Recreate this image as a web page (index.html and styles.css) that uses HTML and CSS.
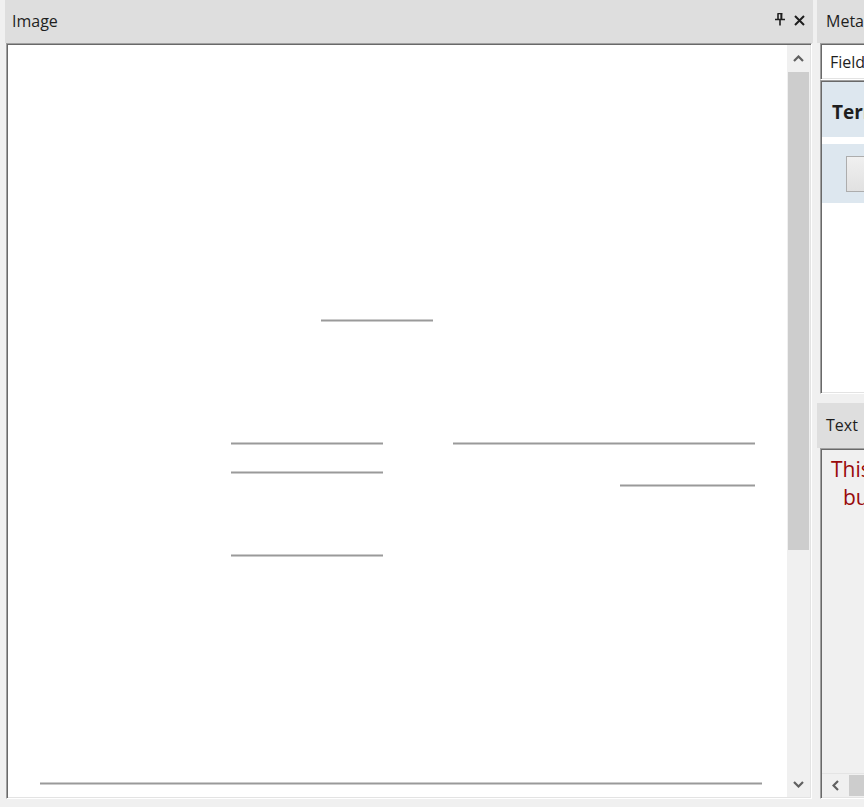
FILE: index.html
```html
<!DOCTYPE html>
<html>
<head>
<meta charset="utf-8">
<title>Image viewer</title>
<link rel="stylesheet" href="styles.css">
</head>
<body>
<div class="app">
  <section class="pane pane-left">
    <header class="pane-title">
      <span class="title-text">Image</span>
      <span class="title-buttons">
        <svg class="icon-pin" width="10" height="13" viewBox="0 0 10 13">
          <path d="M2.5 0.5h5M3 0.5v6M6.5 0.5v6M0 6.5h10M5 6.5v6" fill="none" stroke="#1e1e1e" stroke-width="1.6"/>
          <rect x="5.5" y="1" width="1.6" height="5.5" fill="#1e1e1e"/>
        </svg>
        <svg class="icon-close" width="11" height="11" viewBox="0 0 11 11">
          <path d="M1 1L10 10M10 1L1 10" fill="none" stroke="#1e1e1e" stroke-width="2"/>
        </svg>
      </span>
    </header>
    <div class="sunken image-box">
      <div class="canvas">
        <svg class="drawing" width="779" height="752" viewBox="0 0 779 752">
          <g stroke="#9a9a9a" stroke-width="2" fill="none">
            <line x1="313" y1="275.5" x2="425" y2="275.5"/>
            <line x1="223" y1="398.5" x2="375" y2="398.5"/>
            <line x1="445" y1="398.5" x2="747" y2="398.5"/>
            <line x1="223" y1="427.5" x2="375" y2="427.5"/>
            <line x1="612" y1="440.5" x2="747" y2="440.5"/>
            <line x1="223" y1="510.5" x2="375" y2="510.5"/>
            <line x1="32" y1="738.5" x2="754" y2="738.5"/>
          </g>
        </svg>
      </div>
      <div class="vscroll">
        <div class="sb-btn">
          <svg width="11" height="7" viewBox="0 0 11 7"><path d="M1 6L5.5 1.5L10 6" fill="none" stroke="#606060" stroke-width="2.2"/></svg>
        </div>
        <div class="sb-track"><div class="sb-thumb"></div></div>
        <div class="sb-btn">
          <svg width="11" height="7" viewBox="0 0 11 7"><path d="M1 1L5.5 5.5L10 1" fill="none" stroke="#606060" stroke-width="2.2"/></svg>
        </div>
      </div>
    </div>
  </section>
  <section class="pane pane-right">
    <header class="pane-title pane-title-right">
      <span class="title-text">Metadata</span>
    </header>
    <div class="sunken combo">Field name</div>
    <div class="sunken grid-box">
      <div class="grid-head">Term</div>
      <div class="grid-row"><button class="row-btn">Edit</button></div>
    </div>
    <header class="pane-title pane-title-right text-title">
      <span class="title-text">Text</span>
    </header>
    <div class="sunken text-box">
      <div class="text-content">
        <div class="text-line">This is the recognized text</div>
        <div class="text-line indent">but it is shown here</div>
      </div>
      <div class="hscroll">
        <div class="hsb-btn">
          <svg width="7" height="11" viewBox="0 0 7 11"><path d="M6 1L1.5 5.5L6 10" fill="none" stroke="#606060" stroke-width="2.2"/></svg>
        </div>
        <div class="hsb-thumb"></div>
      </div>
    </div>
  </section>
</div>
</body>
</html>
```
FILE: styles.css
```css
html, body {
  margin: 0;
  padding: 0;
  background: #f0f0f0;
  overflow: hidden;
}

body {
  font-family: "Open Sans", "Noto Sans", sans-serif;
  font-size: 16px;
  color: #1e1e1e;
}

.app {
  display: flex;
  width: 864px;
  height: 807px;
  overflow: hidden;
  padding-left: 5px;
  box-sizing: border-box;
}

.pane {
  display: flex;
  flex-direction: column;
  flex-shrink: 0;
  padding-bottom: 8px;
  box-sizing: border-box;
  height: 807px;
}

.pane-left {
  width: 808px;
  margin-right: 4px;
}

.pane-right {
  width: 320px;
}

.pane-title {
  height: 43px;
  flex-shrink: 0;
  background: #dedede;
  display: flex;
  align-items: center;
  padding: 0 7px 2px;
  box-sizing: border-box;
}

.pane-title-right {
  padding-left: 9px;
}

.title-text {
  flex: 1;
  white-space: nowrap;
}

.title-buttons {
  display: flex;
  align-items: center;
  gap: 9px;
  padding-right: 1px;
}

.icon-pin {
  margin-top: -3px;
}

.sunken {
  border: 1px solid;
  border-color: #a0a0a0 #ffffff #ffffff #a0a0a0;
  box-shadow: inset 1px 1px #696969, inset -1px -1px #e3e3e3;
  padding: 1px;
  box-sizing: border-box;
}

.image-box {
  flex: 1;
  display: flex;
  margin: 0 1px;
  background: #ffffff;
}

.canvas {
  flex: 1;
  overflow: hidden;
}

.drawing {
  display: block;
}

.vscroll {
  width: 23px;
  display: flex;
  flex-direction: column;
  background: #f0f0f0;
}

.sb-btn {
  height: 26px;
  display: flex;
  align-items: center;
  justify-content: center;
  flex-shrink: 0;
}

.sb-track {
  flex: 1;
  padding: 1px 1px 0;
}

.sb-thumb {
  height: 478px;
  background: #cdcdcd;
}

.combo {
  margin-left: 3px;
  height: 37px;
  background: #ffffff;
  display: flex;
  align-items: center;
  padding-left: 9px;
  white-space: nowrap;
  flex-shrink: 0;
}

.grid-box {
  margin-left: 3px;
  height: 314px;
  background: #ffffff;
  flex-shrink: 0;
}

.grid-head {
  height: 55px;
  background: #dde7ef;
  display: flex;
  align-items: center;
  padding: 5px 0 0 10px;
  box-sizing: border-box;
  font-weight: bold;
  font-size: 19px;
  white-space: nowrap;
}

.grid-row {
  margin-top: 7px;
  height: 59px;
  background: #dde7ef;
  padding: 12px 0 0 24px;
  box-sizing: border-box;
}

.row-btn {
  height: 36px;
  width: 120px;
  border: 1px solid #adadad;
  background: linear-gradient(#f0f0f0, #e1e1e1);
  font: inherit;
  padding: 0;
}

.text-title {
  margin-top: 9px;
  height: 45px;
}

.text-box {
  margin-left: 3px;
  flex: 1;
  display: flex;
  flex-direction: column;
  background: #f0f0f0;
}

.text-content {
  flex: 1;
  padding: 5px 0 0 9px;
  color: #990a0a;
  font-size: 21px;
  line-height: 28px;
  white-space: nowrap;
}

.indent {
  padding-left: 12px;
}

.hscroll {
  height: 24px;
  display: flex;
  align-items: stretch;
  border-top: 1px solid #e4e4e4;
  background: #f0f0f0;
  box-sizing: border-box;
}

.hsb-btn {
  width: 26px;
  display: flex;
  align-items: center;
  justify-content: center;
  flex-shrink: 0;
}

.hsb-thumb {
  width: 200px;
  margin: 1px 0 1px 1px;
  background: #cdcdcd;
}
```
